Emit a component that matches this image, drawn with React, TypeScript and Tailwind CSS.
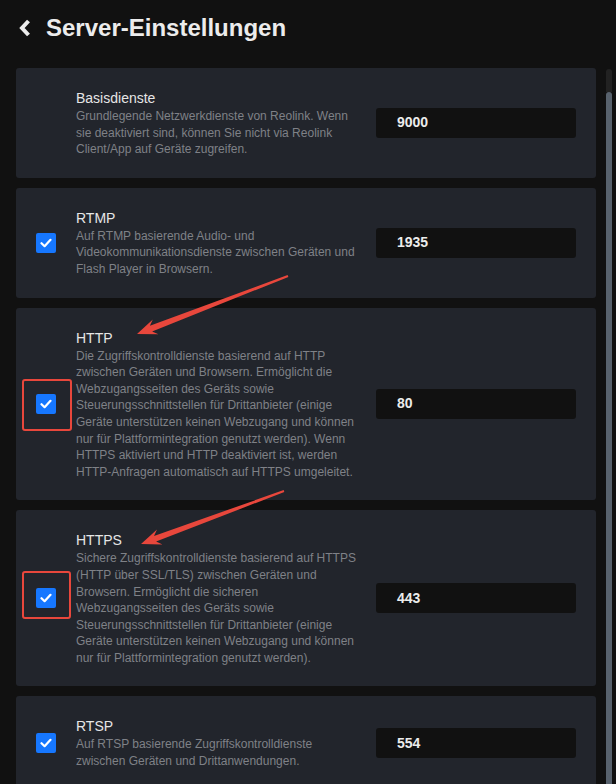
import React from 'react';

type Service = {
  title: string;
  desc: string;
  port: string;
  checkbox: boolean;
  mark?: 'http' | 'https';
};

const services: Service[] = [
  {
    title: 'Basisdienste',
    desc: 'Grundlegende Netzwerkdienste von Reolink. Wenn sie deaktiviert sind, können Sie nicht via Reolink Client/App auf Geräte zugreifen.',
    port: '9000',
    checkbox: false,
  },
  {
    title: 'RTMP',
    desc: 'Auf RTMP basierende Audio- und Videokommunikationsdienste zwischen Geräten und Flash Player in Browsern.',
    port: '1935',
    checkbox: true,
  },
  {
    title: 'HTTP',
    desc: 'Die Zugriffskontrolldienste basierend auf HTTP zwischen Geräten und Browsern. Ermöglicht die Webzugangsseiten des Geräts sowie Steuerungsschnittstellen für Drittanbieter (einige Geräte unterstützen keinen Webzugang und können nur für Plattformintegration genutzt werden). Wenn HTTPS aktiviert und HTTP deaktiviert ist, werden HTTP-Anfragen automatisch auf HTTPS umgeleitet.',
    port: '80',
    checkbox: true,
    mark: 'http',
  },
  {
    title: 'HTTPS',
    desc: 'Sichere Zugriffskontrolldienste basierend auf HTTPS (HTTP über SSL/TLS) zwischen Geräten und Browsern. Ermöglicht die sicheren Webzugangsseiten des Geräts sowie Steuerungsschnittstellen für Drittanbieter (einige Geräte unterstützen keinen Webzugang und können nur für Plattformintegration genutzt werden).',
    port: '443',
    checkbox: true,
    mark: 'https',
  },
  {
    title: 'RTSP',
    desc: 'Auf RTSP basierende Zugriffskontrolldienste zwischen Geräten und Drittanwendungen.',
    port: '554',
    checkbox: true,
  },
];

// tapered annotation arrow, tail -> tip
function arrowPoints(tx: number, ty: number, px: number, py: number) {
  const dx = px - tx;
  const dy = py - ty;
  const len = Math.hypot(dx, dy);
  const ux = dx / len;
  const uy = dy / len;
  const nx = -uy;
  const ny = ux;
  const headLen = 20;
  const bx = px - ux * headLen;
  const by = py - uy * headLen;
  const sx = bx + ux * 5;
  const sy = by + uy * 5;
  const pts = [
    [tx + nx * 1, ty + ny * 1],
    [sx + nx * 3, sy + ny * 3],
    [bx + nx * 8, by + ny * 8],
    [px, py],
    [bx - nx * 8, by - ny * 8],
    [sx - nx * 3, sy - ny * 3],
    [tx - nx * 1, ty - ny * 1],
  ];
  return pts.map((p) => `${p[0].toFixed(1)},${p[1].toFixed(1)}`).join(' ');
}

function Checkbox() {
  return (
    <div className="w-5 h-5 rounded-[2px] bg-[#1677ff] flex items-center justify-center">
      <svg width="12" height="10" viewBox="0 0 12 10" fill="none">
        <path d="M1.5 5.2 L4.6 8.2 L10.5 1.8" stroke="white" strokeWidth="2.2" strokeLinecap="round" strokeLinejoin="round" />
      </svg>
    </div>
  );
}

function ServiceCard({ s }: { s: Service }) {
  return (
    <div className="flex items-center rounded-[3px] bg-[#22252c] px-5 py-5">
      <div className="relative w-5 h-5 shrink-0">
        {s.checkbox && <Checkbox />}
        {s.mark === 'http' && (
          <div className="absolute -left-[14px] -top-[15px] w-[50px] h-[52px] rounded-[3px] border-2 border-[#e8473c]" />
        )}
        {s.mark === 'https' && (
          <div className="absolute -left-[14px] -top-[17px] w-[49px] h-[48px] rounded-[3px] border-2 border-[#e8473c]" />
        )}
      </div>
      <div className="ml-5 w-[285px]">
        <div className="text-[14px] leading-[20px] text-[#e6e6e6]">{s.title}</div>
        <div className="text-[12px] leading-[16.6px] text-[#7f8187]">{s.desc}</div>
      </div>
      <div className="ml-auto w-[200px] h-[30px] rounded-[3px] bg-[#111111] flex items-center pl-[21px]">
        <span className="text-[14px] font-bold text-[#ececec]">{s.port}</span>
      </div>
    </div>
  );
}

export default function App() {
  return (
    <div
      className="relative w-[616px] h-[784px] overflow-hidden bg-[#111111]"
      style={{ fontFamily: '"Liberation Sans", Arial, sans-serif' }}
    >
      <div className="h-[68px] flex items-start pt-[14px] pl-[19px]">
        <div className="h-[28px] flex items-center">
          <svg width="12" height="18" viewBox="0 0 12 18" fill="none">
            <path d="M9.5 2 L3 9 L9.5 16" stroke="#ececec" strokeWidth="4" strokeLinejoin="miter" />
          </svg>
        </div>
        <h1 className="ml-[15px] text-[24px] leading-[28px] font-bold text-[#ececec]">Server-Einstellungen</h1>
      </div>

      <div className="flex pl-4">
        <div className="w-[580px] flex flex-col gap-[10px]">
          {services.map((s) => (
            <ServiceCard key={s.title} s={s} />
          ))}
        </div>
        <div className="ml-[10px] w-[6px] flex flex-col">
          <div className="h-[23px] mt-[1px] rounded-t-[3px] bg-[#222222]" />
          <div className="h-[700px] rounded-t-[3px] bg-[#58626d]" />
        </div>
      </div>

      <svg className="absolute inset-0 pointer-events-none" width="616" height="784">
        <polygon points={arrowPoints(288, 276, 137, 334)} fill="#e8473c" />
        <polygon points={arrowPoints(284, 491, 141, 544)} fill="#e8473c" />
      </svg>
    </div>
  );
}
